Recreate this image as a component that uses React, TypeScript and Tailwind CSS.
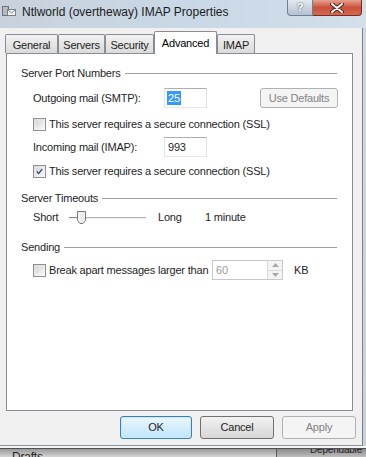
import React from 'react';

const font = { fontFamily: '"Liberation Sans", Arial, sans-serif' };

const Checkbox: React.FC<{ checked?: boolean }> = ({ checked }) => (
    <div className="w-[13px] h-[13px] border border-[#8e8f8f] bg-gradient-to-br from-[#dcdcdc] to-[#fbfbfb] p-[2px] shrink-0">
        <div className="w-full h-full bg-gradient-to-br from-[#d6d6d6] to-[#f4f4f4] flex items-center justify-center">
            {checked && (
                <svg width="9" height="9" viewBox="0 0 9 9">
                    <path d="M1 4.5 L3.5 7 L8 1.5" stroke="#3e4f87" strokeWidth="1.8" fill="none" />
                </svg>
            )}
        </div>
    </div>
);

const GroupHeader: React.FC<{ label: string }> = ({ label }) => (
    <div className="flex items-center h-[14px] gap-[4px]">
        <span className="text-[#1e1e1e]">{label}</span>
        <div className="flex-1 h-px bg-[#a0a0a0] mr-[1px]" />
    </div>
);

const Tab: React.FC<{ label: string; active?: boolean; w: string }> = ({ label, active, w }) =>
    active ? (
        <div className={`${w} h-[23px] -mb-px z-10 bg-white border border-b-0 border-[#898c95] rounded-t-[2px] flex justify-center pt-[3px] text-[#000]`}>
            {label}
        </div>
    ) : (
        <div className={`${w} h-[19px] mt-[3px] bg-gradient-to-b from-[#f2f2f2] to-[#dadada] border border-b-0 border-[#898c95] rounded-t-[2px] flex justify-center pt-[2px] text-[#1e1e1e]`}>
            {label}
        </div>
    );

export default function App() {
    return (
        <div className="w-[366px] h-[457px] overflow-hidden flex flex-col bg-[#cfd9e3] text-[11px] tracking-[-0.2px]" style={font}>
            {/* title bar */}
            <div className="h-[28px] shrink-0 flex items-start bg-gradient-to-r from-[#c8d2dc] via-[#c9d8e6] to-[#d3dfea]">
                <svg width="14" height="14" viewBox="0 0 14 14" className="mt-[4px] ml-[2px]">
                    <rect x="0.5" y="2.5" width="6" height="9" fill="#b8bcc0" stroke="#6d7378" />
                    <rect x="5.5" y="5.5" width="8" height="6" fill="#f4f4f4" stroke="#7a8088" />
                    <path d="M5.5 5.5 L9.5 9 L13.5 5.5" stroke="#7a8088" fill="none" />
                </svg>
                <div className="ml-[6px] mt-[3px] text-[12px] tracking-normal text-[#1b1b1b]">Ntlworld (overtheway) IMAP Properties</div>
                <div className="ml-auto mr-[4px] flex">
                    <div className="w-[26px] h-[16px] rounded-bl-[4px] border border-t-0 border-[#6e7f92] bg-gradient-to-b from-[#e2e9f0] to-[#b4c2d0] flex items-center justify-center text-[11px] font-bold text-white" style={{ textShadow: '0 0 2px #33435a' }}>
                        ?
                    </div>
                    <div className="w-[49px] h-[16px] rounded-br-[4px] border border-t-0 border-l-0 border-[#7a2a22] bg-gradient-to-b from-[#e5a18f] via-[#c9503c] to-[#d06a50] flex items-center justify-center">
                        <svg width="14" height="10" viewBox="0 0 14 10">
                            <path d="M2 1 L12 9 M12 1 L2 9" stroke="#5a2018" strokeWidth="4" strokeLinecap="round" />
                            <path d="M2 1 L12 9 M12 1 L2 9" stroke="#ffffff" strokeWidth="2" strokeLinecap="round" />
                        </svg>
                    </div>
                </div>
            </div>

            <div className="flex h-[418px] shrink-0">
                {/* dialog body */}
                <div className="w-[362px] bg-[#f0f0f0] flex flex-col pl-[6px] pt-[3px] border-b border-[#8f959b]">
                    <div className="flex items-end h-[22px] -ml-[1px]">
                        <Tab label="General" w="w-[53px]" />
                        <Tab label="Servers" w="w-[47px]" />
                        <Tab label="Security" w="w-[49px]" />
                        <Tab label="Advanced" w="w-[63px]" active />
                        <Tab label="IMAP" w="w-[38px]" />
                    </div>
                    <div className="w-[347px] h-[358px] bg-white border border-[#898c95] flex flex-col pl-[14px] pr-[14px]">
                        <div className="mt-[12px]">
                            <GroupHeader label="Server Port Numbers" />
                        </div>
                        <div className="flex items-center h-[20px] mt-[8px] pl-[12px]">
                            <span className="w-[131px] text-[#1e1e1e]">Outgoing mail (SMTP):</span>
                            <div className="w-[43px] h-[20px] border border-[#abadb3] border-l-[#e2e3ea] border-r-[#dbdfe6] border-b-[#e3e9ef] flex items-center pl-[2px]">
                                <span className="bg-[#3399ff] text-white px-[1px] leading-[14px]">25</span>
                            </div>
                            <div className="ml-auto w-[78px] h-[20px] rounded-[3px] border border-[#adb2b5] bg-[#f4f4f4] flex items-center justify-center text-[#838383]">
                                Use Defaults
                            </div>
                        </div>
                        <div className="flex items-center h-[20px] mt-[6px] pl-[12px] gap-[3px]">
                            <Checkbox />
                            <span className="text-[#1e1e1e]">This server requires a secure connection (SSL)</span>
                        </div>
                        <div className="flex items-center h-[20px] mt-[3px] pl-[12px]">
                            <span className="w-[131px] text-[#1e1e1e]">Incoming mail (IMAP):</span>
                            <div className="w-[43px] h-[20px] border border-[#abadb3] border-l-[#e2e3ea] border-r-[#dbdfe6] border-b-[#e3e9ef] flex items-center pl-[3px] text-[#1e1e1e]">
                                993
                            </div>
                        </div>
                        <div className="flex items-center h-[20px] mt-[4px] pl-[12px] gap-[3px]">
                            <Checkbox checked />
                            <span className="text-[#1e1e1e]">This server requires a secure connection (SSL)</span>
                        </div>

                        <div className="mt-[10px]">
                            <GroupHeader label="Server Timeouts" />
                        </div>
                        <div className="flex items-center h-[20px] mt-[2px] pl-[12px] text-[#1e1e1e]">
                            <span className="w-[36px]">Short</span>
                            <svg width="80" height="16" viewBox="0 0 80 16">
                                <line x1="0" y1="8.5" x2="77" y2="8.5" stroke="#b5b5b5" />
                                <line x1="0" y1="9.5" x2="77" y2="9.5" stroke="#eeeeee" />
                                <line x1="0" y1="8.5" x2="8" y2="8.5" stroke="#8a8a8a" />
                                <path d="M8.5 2.5 H16.5 V11.5 L14 14.5 H11 L8.5 11.5 Z" fill="#ececec" stroke="#7b7b7b" />
                                <path d="M10 4 V11" stroke="#ffffff" />
                            </svg>
                            <span className="ml-[9px] w-[47px]">Long</span>
                            <span>1 minute</span>
                        </div>

                        <div className="mt-[13px]">
                            <GroupHeader label="Sending" />
                        </div>
                        <div className="flex items-center h-[20px] mt-[6px] pl-[12px] text-[#1e1e1e]">
                            <Checkbox />
                            <span className="ml-[3px] w-[163px] whitespace-nowrap">Break apart messages larger than</span>
                            <div className="w-[71px] h-[20px] border border-[#c6c9cc] bg-white flex items-center">
                                <span className="flex-1 pl-[3px] text-[#9a9a9a]">60</span>
                                <div className="w-[15px] h-full flex flex-col border-l border-[#dadada]">
                                    <div className="flex-1 flex items-center justify-center bg-[#f4f4f4] border-b border-[#dadada]">
                                        <svg width="7" height="4" viewBox="0 0 7 4"><path d="M0 4 L3.5 0 L7 4 Z" fill="#a8a8a8" /></svg>
                                    </div>
                                    <div className="flex-1 flex items-center justify-center bg-[#f4f4f4]">
                                        <svg width="7" height="4" viewBox="0 0 7 4"><path d="M0 0 L3.5 4 L7 0 Z" fill="#a8a8a8" /></svg>
                                    </div>
                                </div>
                            </div>
                            <span className="ml-[11px]">KB</span>
                        </div>
                    </div>

                    {/* dialog buttons */}
                    <div className="flex mt-[5px] pl-[114px] gap-[8px]">
                        <div className="w-[72px] h-[23px] rounded-[3px] border border-[#3c7fb1] bg-gradient-to-b from-[#eaf6fd] to-[#bee6fd] flex items-center justify-center text-[#1e1e1e] shadow-[inset_0_0_0_1px_#c8e8f8]">
                            OK
                        </div>
                        <div className="w-[74px] h-[23px] rounded-[3px] border border-[#707070] bg-gradient-to-b from-[#f2f2f2] to-[#d6d6d6] flex items-center justify-center text-[#1e1e1e]">
                            Cancel
                        </div>
                        <div className="w-[74px] h-[23px] rounded-[3px] border border-[#adb2b5] bg-[#f4f4f4] flex items-center justify-center text-[#838383]">
                            Apply
                        </div>
                    </div>
                </div>
                {/* right window frame */}
                <div className="flex-1 border-l border-[#7d8288] bg-gradient-to-b from-[#d0d9e2] to-[#c9d2db]" />
            </div>

            {/* bottom frame and what lies behind the dialog */}
            <div className="h-[3px] shrink-0 bg-[#f2f4f6] border-b border-[#4e5256]" />
            <div className="flex-1 flex overflow-hidden bg-gradient-to-b from-[#8c8c8c] to-[#bdbdbd]">
                <div className="w-[277px] flex border-r border-[#5a5a5a] bg-gradient-to-b from-[#9a9a9a] to-[#d4d4d4]">
                    <span className="ml-[12px] mt-[1px] text-[12px] leading-[14px] text-[#222]">Drafts</span>
                </div>
                <span className="ml-auto mr-[4px] text-[10px] leading-[12px] text-[#222] -mt-[5px]">Dependable</span>
            </div>
        </div>
    );
}
